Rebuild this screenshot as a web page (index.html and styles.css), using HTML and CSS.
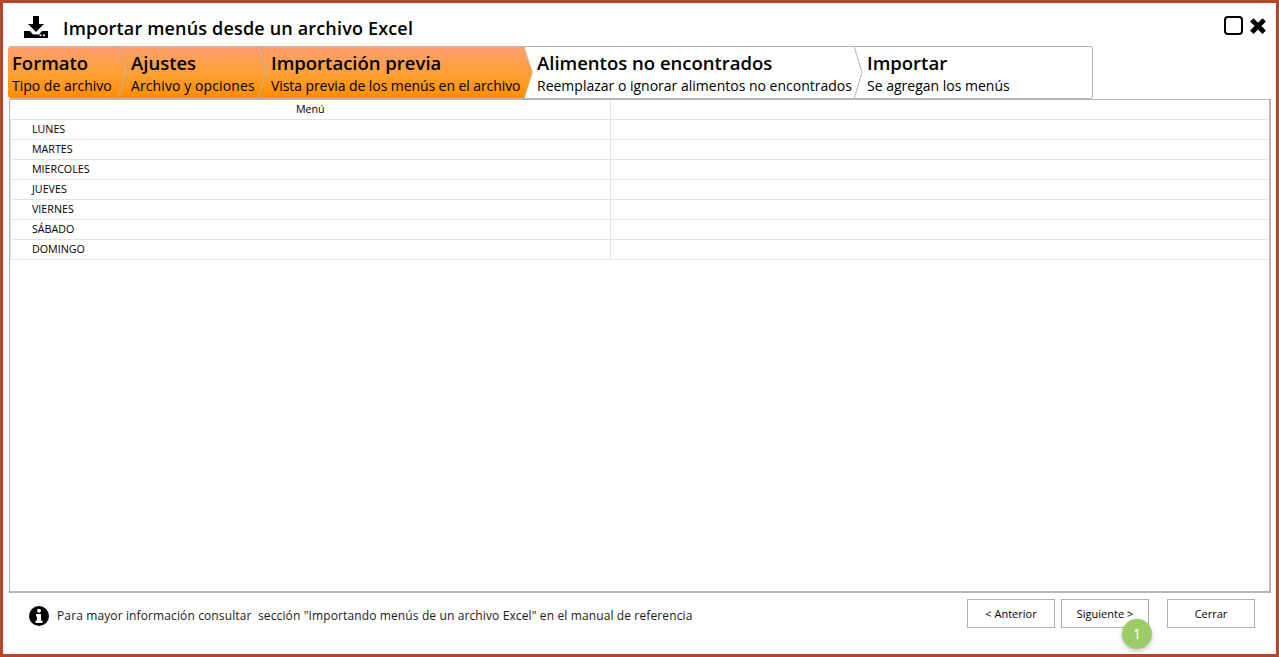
FILE: index.html
```html
<!DOCTYPE html>
<html lang="es">
<head>
<meta charset="utf-8">
<title>Importar menús desde un archivo Excel</title>
<link rel="stylesheet" href="styles.css">
</head>
<body>
<div class="window">
  <header class="titlebar">
    <svg class="title-icon" viewBox="0 0 24 22" width="24" height="22"><path d="M9 0h6v8h5l-8 8-8-8h5z" fill="#000"/><path d="M0 15h6l3 3.500h6l3-3.500h6v7H0z" fill="#000"/><rect x="15.500" y="18.500" width="2" height="1.500" fill="#fff"/><rect x="19" y="18.500" width="2" height="1.500" fill="#fff"/></svg>
    <h1 class="title">Importar menús desde un archivo Excel</h1>
    <div class="win-controls">
      <span class="win-max"></span>
      <svg class="win-close" viewBox="0 0 16 16" width="18" height="18"><path d="M1 4l3-3 4 4 4-4 3 3-4 4 4 4-3 3-4-4-4 4-3-3 4-4z" fill="#000"/></svg>
    </div>
  </header>
  <nav class="steps">
    <div class="step done s1"><b>Formato</b><span>Tipo de archivo</span>
      <svg class="chev" viewBox="0 0 9 53" width="9" height="53"><path d="M0 0L8 26.500 0 53" fill="none" stroke="#b5b0a8"/></svg></div>
    <div class="step done s2"><b>Ajustes</b><span>Archivo y opciones</span>
      <svg class="chev" viewBox="0 0 9 53" width="9" height="53"><path d="M0 0L8 26.500 0 53" fill="none" stroke="#b5b0a8"/></svg></div>
    <div class="step done s3"><b>Importación previa</b><span>Vista previa de los menús en el archivo</span>
      <svg class="chev" viewBox="0 0 9 53" width="9" height="53"><defs><linearGradient id="g" x1="0" y1="0" x2="0" y2="1"><stop offset="0" stop-color="#ff9f6f"/><stop offset=".55" stop-color="#ffa030"/><stop offset="1" stop-color="#ff8c00"/></linearGradient></defs><path d="M0 0L8.500 26.500 0 53z" fill="url(#g)" stroke="#b5b5b5" stroke-width=".4"/></svg></div>
    <div class="step s4"><b>Alimentos no encontrados</b><span>Reemplazar o ignorar alimentos no encontrados</span>
      <svg class="chev" viewBox="0 0 9 53" width="9" height="53"><path d="M0 0L8 26.500 0 53" fill="none" stroke="#b5b5b5"/></svg></div>
    <div class="step s5"><b>Importar</b><span>Se agregan los menús</span></div>
  </nav>
  <main class="panel">
    <table class="grid">
      <thead><tr><th class="col-menu">Menú</th><th></th></tr></thead>
      <tbody>
        <tr><td>LUNES</td><td></td></tr>
        <tr><td>MARTES</td><td></td></tr>
        <tr><td>MIERCOLES</td><td></td></tr>
        <tr><td>JUEVES</td><td></td></tr>
        <tr><td>VIERNES</td><td></td></tr>
        <tr><td>SÁBADO</td><td></td></tr>
        <tr><td>DOMINGO</td><td></td></tr>
      </tbody>
    </table>
  </main>
  <footer class="footer">
    <svg class="info" viewBox="0 0 20 20" width="20" height="20"><circle cx="10" cy="10" r="10" fill="#000"/><circle cx="10" cy="4.800" r="2" fill="#fff"/><path d="M7 8h5v6.500h1.500V17h-7v-2.500H8V10.500H7z" fill="#fff"/></svg>
    <p class="note">Para mayor información consultar&nbsp; sección "Importando menús de un archivo Excel" en el manual de referencia</p>
    <div class="buttons">
      <button class="btn">&lt; Anterior</button>
      <div class="btn-wrap"><button class="btn">Siguiente &gt;</button><span class="badge">1</span></div>
      <button class="btn btn-close">Cerrar</button>
    </div>
  </footer>
</div>
</body>
</html>
```
FILE: styles.css
```css
* { box-sizing: border-box; }
html, body { margin: 0; padding: 0; background: #fff; }
body { font-family: "Open Sans", "Noto Sans", sans-serif; color: #000; overflow: hidden; }
.window { width: 1279px; height: 657px; border: 3px solid #b8442a; display: flex; flex-direction: column; background: #fff; }
.titlebar { height: 43px; flex: none; display: flex; align-items: flex-start; padding: 10px 0 0 21px; }
.title-icon { flex: none; margin-top: 3px; }
.title { margin: 4px 0 0 15px; font-size: 18px; line-height: 22px; font-weight: 600; letter-spacing: 0.17px; }
.win-controls { margin-left: auto; display: flex; align-items: center; gap: 6px; padding: 3px 9px 0 0; }
.win-max { width: 19px; height: 19px; border: 2px solid #000; border-radius: 4px; }
.steps { margin-left: 5px; width: 1085px; height: 53px; flex: none; display: flex; border: 1px solid #b5b5b5; border-radius: 3px; border-left: 0; position: relative; z-index: 1; }
.step { position: relative; padding: 3px 0 0 4px; display: flex; flex-direction: column; white-space: nowrap; }
.step b { font-size: 18.500px; line-height: 26px; font-weight: 600; }
.step span { font-size: 14px; line-height: 20px; }
.done { background: linear-gradient(#ff9f6f, #ffa030 55%, #ff8c00); }
.s1 { width: 111px; border-radius: 3px 0 0 3px; }
.s2 { width: 140px; padding-left: 12px; }
.s2 span { letter-spacing: 0.1px; }
.s3 { width: 266px; padding-left: 12px; }
.s3 span { letter-spacing: -0.08px; }
.s4 { width: 330px; padding-left: 12px; }
.s5 { flex: 1; padding-left: 12px; }
.chev { position: absolute; right: -8px; top: -1px; z-index: 2; }
.panel { margin: 0 5px 0 6px; height: 494px; flex: none; border: 1px solid #b5b5b5; border-bottom-width: 2px; border-right-width: 2px; overflow: hidden; }
.grid { width: 100%; border-collapse: collapse; table-layout: fixed; font-size: 10.700px; }
.grid th { height: 19px; padding: 0; font-weight: 400; border-bottom: 1px solid #e3e3e3; text-align: center; }
.grid .col-menu { width: 600px; border-right: 1px solid #e3e3e3; }
.grid td { height: 20px; padding: 0 0 0 21px; border-bottom: 1px solid #e3e3e3; border-left: 1px solid #e3e3e3; }
.footer { flex: 1; display: flex; align-items: flex-start; padding: 12px 0 0 26px; }
.info { flex: none; margin-top: 1px; }
.note { margin: 1px 0 0 8px; font-size: 12px; line-height: 20px; letter-spacing: 0.12px; color: #1a1a1a; }
.buttons { margin-left: auto; display: flex; gap: 6px; margin-right: 21px; margin-top: -6px; }
.btn-wrap { position: relative; }
.btn { display: block; width: 88px; height: 29px; padding: 0; background: #fff; border: 1px solid #b0b0b0; font-family: inherit; font-size: 11px; color: #000; }
.btn-close { margin-left: 12px; }
.badge { position: absolute; left: 61px; top: 20px; width: 30px; height: 30px; border-radius: 50%; background: #9ccc65; color: #fff; font-size: 14px; line-height: 30px; text-align: center; box-shadow: 0 2px 5px rgba(0,0,0,.25); }
```
